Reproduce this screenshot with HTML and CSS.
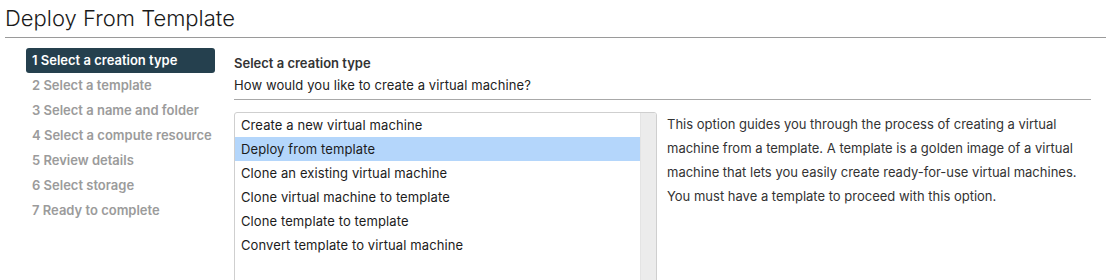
FILE: index.html
```html
<!DOCTYPE html>
<html>
<head>
<meta charset="utf-8">
<link rel="stylesheet" href="styles.css">
</head>
<body>
<div class="page">
  <h1 class="title">Deploy From Template</h1>
  <div class="wizard">
    <nav class="steps">
      <div class="step active">1 Select a creation type</div>
      <div class="step">2 Select a template</div>
      <div class="step">3 Select a name and folder</div>
      <div class="step">4 Select a compute resource</div>
      <div class="step">5 Review details</div>
      <div class="step">6 Select storage</div>
      <div class="step">7 Ready to complete</div>
    </nav>
    <main class="content">
      <div class="head">
        <div class="head-title">Select a creation type</div>
        <div class="head-sub">How would you like to create a virtual machine?</div>
      </div>
      <div class="body">
        <div class="listbox">
          <ul class="options">
            <li>Create a new virtual machine</li>
            <li class="selected">Deploy from template</li>
            <li>Clone an existing virtual machine</li>
            <li>Clone virtual machine to template</li>
            <li>Clone template to template</li>
            <li>Convert template to virtual machine</li>
          </ul>
          <div class="gutter"></div>
        </div>
        <p class="desc">This option guides you through the process of creating a virtual machine from a template. A template is a golden image of a virtual machine that lets you easily create ready-for-use virtual machines. You must have a template to proceed with this option.</p>
      </div>
    </main>
  </div>
</div>
</body>
</html>
```
FILE: styles.css
```css
html, body {
  margin: 0;
  padding: 0;
  background: #fff;
}
body {
  font-family: "Inter", "Lato", sans-serif;
  color: #313131;
  overflow: hidden;
  height: 280px;
}
.page {
  padding: 0 13px 0 5px;
}
.title {
  margin: 0;
  font-weight: 300;
  font-size: 22px;
  line-height: 37px;
  color: #1a1a1a;
  border-bottom: 1px solid #9a9a9a;
  height: 37px;
}
.wizard {
  display: flex;
  padding-top: 10px;
}
.steps {
  width: 189px;
  margin-left: 21px;
  flex: none;
}
.step {
  height: 25px;
  line-height: 25px;
  padding-left: 6px;
  font-size: 13px;
  font-weight: 600;
  color: #9b9b9b;
  white-space: nowrap;
}
.step.active {
  background: #25404e;
  color: #fff;
  border-radius: 3px;
}
.content {
  margin-left: 19px;
  flex: 1;
  padding-right: 15px;
}
.head {
  border-bottom: 1px solid #a8a8a8;
  padding-bottom: 6px;
}
.head-title {
  font-size: 13px;
  font-weight: 600;
  color: #333;
  line-height: 16px;
  padding-top: 7px;
}
.head-sub {
  font-size: 13px;
  letter-spacing: 0.1px;
  line-height: 16px;
  margin-top: 6px;
  color: #222;
}
.body {
  display: flex;
  margin-top: 12px;
}
.listbox {
  width: 421px;
  height: 180px;
  border: 1px solid #cfcfcf;
  border-radius: 3px;
  display: flex;
  flex: none;
  overflow: hidden;
}
.options {
  list-style: none;
  margin: 0;
  padding: 0;
  flex: 1;
}
.options li {
  height: 24px;
  line-height: 24px;
  padding-left: 6px;
  font-size: 13px;
  letter-spacing: 0.1px;
  color: #1c1c1c;
}
.options li.selected {
  background: #b4d6fb;
}
.gutter {
  width: 15px;
  background: #ececec;
  border-left: 1px solid #e4e4e4;
}
.desc {
  margin: 0 0 0 10px;
  font-size: 13px;
  line-height: 24px;
  color: #333;
  width: 420px;
}
```
